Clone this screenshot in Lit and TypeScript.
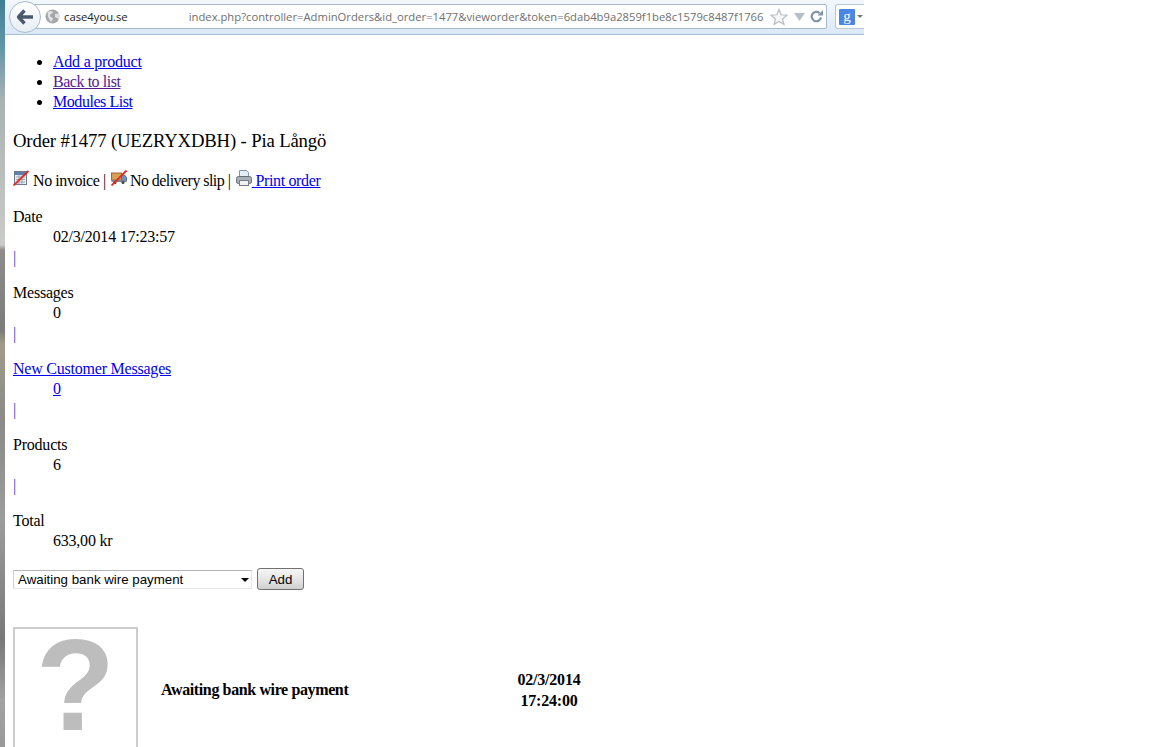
import { LitElement, html, css } from "lit";
import { customElement } from "lit/decorators.js";

@customElement("app-root")
export class AppRoot extends LitElement {
  static styles = css`
    :host { display: block; width: 1152px; height: 747px; overflow: hidden; background: #fff; font: 16px/20px "Liberation Serif", serif; color: #000; }
    .frame { display: flex; height: 747px; }
    .edge { width: 5px; flex: none; background: linear-gradient(180deg, #3f7f96 0, #5f95a8 45px, #a9b3b2 100px, #c9cbc8 245px, #8d8d8b 250px, #7c7c7a 330px, #a19b8a 345px, #8a8a88 420px, #9c9c9c 520px, #787878 640px, #a2a2a2 700px, #9a9a9a 747px); }
    .main { flex: 1; min-width: 0; }
    .toolbar { width: 859px; background: linear-gradient(#f3f8fd, #dbe8f6); border-bottom: 1px solid #a9bfd8; display: flex; align-items: flex-start; padding-top: 4px; height: 30px; position: relative; }
    .back { position: absolute; left: 4px; top: 1px; width: 30px; height: 30px; border-radius: 50%; border: 1px solid #a9bccf; background: linear-gradient(#fff, #e8eef5); display: flex; align-items: center; justify-content: center; }
    .omni { margin-left: 19px; width: 803px; height: 23px; background: #fff; border: 1px solid #a6bacd; border-radius: 2px; display: flex; align-items: center; font: 11.25px/16px "Open Sans", "Noto Sans", sans-serif; white-space: nowrap; overflow: hidden; }
    .globe { margin-left: 20px; flex: none; }
    .host { margin-left: 4px; color: #222; }
    .path { margin-left: 61px; color: #6f6f6f; flex: none; }
    .omni svg.tool { flex: none; }
    .star { margin-left: 7px; }
    .tri { margin-left: 6px; }
    .reload { margin-left: 5px; }
    .search { margin-left: 8px; width: 29px; height: 25px; box-sizing: border-box; background: #fff; border: 1px solid #b8c9da; border-right: 0; border-radius: 3px 0 0 3px; display: flex; align-items: center; padding-left: 3px; gap: 2px; }
    .g { width: 16px; height: 16px; background: #4a86e8; color: #fff; font: 15px/14px "Liberation Serif", serif; text-align: center; border-radius: 1px; }
    .caret { width: 0; height: 0; border: 3px solid transparent; border-top: 3px solid #777; border-bottom: 0; }
    .content { padding-left: 8px; letter-spacing: -0.22px; }
    a { color: #0000ee; }
    a.seen { color: #551a8b; }
    ul { margin: 17px 0 0; padding-left: 40px; }
    .tight { letter-spacing: -0.45px; }
    h3 { margin: 18px 0 0; font-size: 18.72px; line-height: 21px; font-weight: normal; letter-spacing: -0.15px; }
    .status { margin-top: 19px; height: 22px; white-space: nowrap; display: flex; align-items: flex-start; }
    .status svg { flex: none; margin-right: 4px; }
    .status svg.truck { margin-right: 3px; }
    .status span { white-space: pre; padding-top: 1px; letter-spacing: -0.42px; }
    .status span.first { padding-right: 1.500px; }
    .status span.second { padding-right: 2px; letter-spacing: -0.55px; }
    .status a { padding-top: 1px; white-space: pre; letter-spacing: -0.35px; }
    dl { margin: 15px 0 0; }
    dd { margin-left: 40px; }
    .bar { color: #1a44c8; height: 36px; line-height: 22px; }
    .form { margin-top: 17px; display: flex; gap: 5px; align-items: center; height: 22px; letter-spacing: 0; }
    .pick { position: relative; display: flex; }
    .pick::after { content: ""; position: absolute; right: 3px; top: 8px; border: 4px solid transparent; border-top: 4px solid #000; border-bottom: 0; pointer-events: none; }
    select { appearance: none; width: 239px; height: 19px; box-sizing: border-box; font: 13.3px "Liberation Sans", Arial, sans-serif; background: #fff; border: 1px solid #e2e6ea; border-top-color: #b5b5b5; border-left-color: #cfcfcf; padding: 0 0 0 4px; color: #000; border-radius: 0; }
    button { width: 47px; height: 22px; box-sizing: border-box; font: 13.3px "Liberation Sans", Arial, sans-serif; background: linear-gradient(#f6f6f6 0, #e6e6e6 50%, #cfcfcf 100%); border: 1px solid #707070; border-radius: 3px; padding: 0; color: #000; }
    table { margin-top: 37px; border-collapse: collapse; font-weight: bold; }
    td { padding: 0; }
    .ph { width: 121px; height: 112px; padding-bottom: 10px; border: 2px solid #ccc; display: flex; align-items: center; justify-content: center; font: bold 130px/100px "Liberation Sans", Arial, sans-serif; letter-spacing: 0; color: #bdbdbd; }
    .name { padding-left: 23px; width: 323px; letter-spacing: -0.38px; }
    .when { width: 130px; text-align: center; line-height: 21px; }
  `;

  render() {
    return html`
      <div class="frame">
        <div class="edge"></div>
        <div class="main">
          <div class="toolbar">
            <div class="back">
              <svg width="18" height="16" viewBox="0 0 18 16"><path d="M8.500 1.500 2.500 8 8.500 14.500M3 8h14" fill="none" stroke="#4a5a6c" stroke-width="3.400" stroke-linejoin="round"/></svg>
            </div>
            <div class="omni">
              <svg class="globe" width="15" height="15" viewBox="0 0 15 15"><circle cx="7.500" cy="7.500" r="7" fill="#a4a8ab"/><path d="M3 3c2-1.500 4-1 5 0 0 2-3 1.500-3 3.500S8 8 8 10l-2 3C3.500 10 2 6 3 3zM10 5l4-.5c.5 2 .5 4-.5 5.500L10 8z" fill="#dfe2e4"/></svg>
              <span class="host">case4you.se</span>
              <span class="path">index.php?controller=AdminOrders&amp;id_order=1477&amp;vieworder&amp;token=6dab4b9a2859f1be8c1579c8487f1766</span>
              <svg class="tool star" width="18" height="18" viewBox="0 0 18 18"><path d="M9 1.500 11.200 6.800 17 7.200 12.500 11 14 16.500 9 13.500 4 16.500 5.500 11 1 7.200 6.800 6.800z" fill="#f7f7f7" stroke="#b9bdc0" stroke-width="1.200"/></svg>
              <svg class="tool tri" width="11" height="8" viewBox="0 0 11 8"><path d="M0 0h11L5.500 8z" fill="#b4bfc8"/></svg>
              <svg class="tool reload" width="13" height="13" viewBox="0 0 13 13"><path d="M11 7.500A4.700 4.700 0 1 1 9.500 3" fill="none" stroke="#7f93a5" stroke-width="2.200"/><path d="M7.500 5.500H13V0z" fill="#7f93a5"/></svg>
            </div>
            <div class="search"><div class="g">g</div><div class="caret"></div></div>
          </div>
          <div class="content">
            <ul>
              <li><a href="#">Add a product</a></li>
              <li class="tight"><a class="seen" href="#">Back to list</a></li>
              <li class="tight"><a href="#">Modules List</a></li>
            </ul>
            <h3>Order #1477 (UEZRYXDBH) - Pia Långö</h3>
            <div class="status">
              <svg width="16" height="16" viewBox="0 0 16 16"><rect x="1.500" y="1.500" width="12" height="13" fill="#e8edf3" stroke="#6d7c8e"/><rect x="2" y="2" width="11" height="3" fill="#5f7fb0"/><path d="M3 7h9M3 9.500h9M3 12h9M6 5v9M9 5v9" stroke="#9aa7b5"/><path d="M0.500 15.500 15.500 1" stroke="#e8261c" stroke-width="1.800"/></svg>
              <span class="first">No invoice | </span>
              <svg class="truck" width="16" height="16" viewBox="0 0 16 16"><rect x="0.500" y="3" width="10" height="7" fill="#d9a05c" stroke="#a06a30"/><path d="M10.500 5h3l2 2.500V11h-5z" fill="#6f93c4" stroke="#4d6a92"/><rect x="0.500" y="10" width="15" height="2" fill="#7b8794"/><circle cx="4" cy="12.500" r="1.500" fill="#444"/><circle cx="12" cy="12.500" r="1.500" fill="#444"/><path d="M0.500 15.500 15.500 0.500" stroke="#e8261c" stroke-width="1.800"/></svg>
              <span class="second">No delivery slip | </span>
              <svg style="margin-right:0" width="16" height="16" viewBox="0 0 16 16"><path d="M3.500 8V0.500h7l2 2V8" fill="#e6eef8" stroke="#7f95b0"/><rect x="0.500" y="6.500" width="15" height="7" rx="2" fill="#aab0b8" stroke="#666d75"/><rect x="3.500" y="10.500" width="9" height="5" fill="#f3f3f3" stroke="#777d84"/></svg>
              <a href="#"> Print order</a>
            </div>
            <dl>
              <dt>Date</dt><dd>02/3/2014 17:23:57</dd>
              <div class="bar">|</div>
              <dt>Messages</dt><dd>0</dd>
              <div class="bar">|</div>
              <dt><a href="#">New Customer Messages</a></dt><dd><a href="#">0</a></dd>
              <div class="bar">|</div>
              <dt>Products</dt><dd>6</dd>
              <div class="bar">|</div>
              <dt>Total</dt><dd>633,00 kr</dd>
            </dl>
            <div class="form">
              <div class="pick"><select><option>Awaiting bank wire payment</option></select></div>
              <button>Add</button>
            </div>
            <table>
              <tr>
                <td><div class="ph">?</div></td>
                <td class="name">Awaiting bank wire payment</td>
                <td class="when">02/3/2014<br />17:24:00</td>
              </tr>
            </table>
          </div>
        </div>
      </div>
    `;
  }
}
